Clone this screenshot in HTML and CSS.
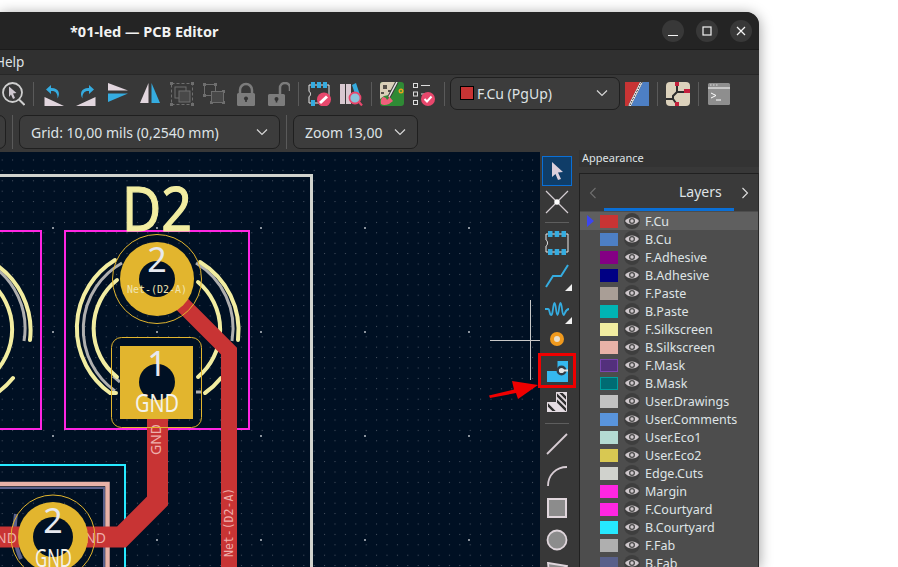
FILE: index.html
```html
<!DOCTYPE html>
<html lang="en">
<head>
    <meta charset="UTF-8">
    <meta name="viewport" content="width=device-width, initial-scale=1.0">
    <title>PCB Editor</title>
    <link rel="stylesheet" href="styles.css">
</head>
<body>

<svg class="defs" width="0" height="0">
    <symbol id="eye" viewBox="0 0 14 14">
        <path d="M0 7C3 2.300 11 2.300 14 7 11 11.700 3 11.700 0 7Z" fill="#cfc8cc"/>
        <circle cx="7" cy="7" r="3" fill="#4a4a4a"/>
        <circle cx="7" cy="7" r="1.700" fill="#cfc8cc"/>
    </symbol>
    <symbol id="chev" viewBox="0 0 12 8">
        <path d="M1 1.500 6 6.500 11 1.500" fill="none" stroke="#d6d6d6" stroke-width="1.200"/>
    </symbol>
    <g id="led">
        <rect x="65" y="231" width="184" height="198" fill="none" stroke="#ff26e2" stroke-width="2"/>
        <g fill="none" stroke="#afafaf" stroke-width="3">
            <path d="M122 263A76 76 0 0 0 115 391"/>
            <path d="M196 263A76 76 0 0 1 232 341"/>
            <path d="M196 392H202"/>
            <path d="M113 376L120 382"/>
        </g>
        <g fill="none" stroke="#f2eda1" stroke-width="4" stroke-linecap="round">
            <path d="M115 260A80 80 0 0 0 110 393H116"/>
            <path d="M200 262A80 80 0 0 1 238 340"/>
            <path d="M117 280A62 62 0 0 0 117 377"/>
            <path d="M198 282A62 62 0 0 1 198 377"/>
            <path d="M221 378A80 80 0 0 1 205 393"/>
        </g>
    </g>
</svg>

<div class="window">
    <header class="titlebar">
        <span class="title">*01-led — PCB Editor</span>
        <div class="winbtns">
            <span class="winbtn"><svg width="12" height="12" viewBox="0 0 12 12"><path d="M1 10.500H11" stroke="#f4f4f4" stroke-width="1.200"/></svg></span>
            <span class="winbtn"><svg width="12" height="12" viewBox="0 0 12 12"><rect x="2" y="2" width="8" height="8" fill="none" stroke="#f4f4f4" stroke-width="1.200"/></svg></span>
            <span class="winbtn"><svg width="12" height="12" viewBox="0 0 12 12"><path d="M2 2 10 10M10 2 2 10" stroke="#f4f4f4" stroke-width="1.200"/></svg></span>
        </div>
    </header>

    <nav class="menubar"><span class="menu-help">Help</span></nav>

    <div class="toolbar">
        <svg class="ic" viewBox="0 0 24 24"><circle cx="11.500" cy="10.500" r="9.500" fill="none" stroke="#cfcfcf" stroke-width="1.800"/><path d="M18 17.500 23.500 23" stroke="#cfcfcf" stroke-width="2"/><path d="M8 4.500 15.500 11 12 11.500 14 16 12 17 10 12.500 8 15Z" fill="#cfc8d0"/></svg>
        <i class="sep"></i>
        <svg class="ic" viewBox="0 0 24 24"><path d="M2.500 15 22 24H2.500Z" fill="#e2d6de"/><path d="M9 3 4 7.500 9 12V9C13 8.500 16 11 15.500 16.500 19 11 16 5.500 9 6Z" fill="#35ace0"/></svg>
        <svg class="ic" viewBox="0 0 24 24"><path d="M21.500 15 2 24H21.500Z" fill="#e2d6de"/><path d="M15 3 20 7.500 15 12V9C11 8.500 8 11 8.500 16.500 5 11 8 5.500 15 6Z" fill="#35ace0"/></svg>
        <svg class="ic" viewBox="0 0 24 24"><path d="M2 1 22 8.500H2Z" fill="#e2d6de"/><path d="M2 11.500H22L2 20Z" fill="#35ace0"/></svg>
        <svg class="ic" viewBox="0 0 24 24"><path d="M10.500 1V21H2Z" fill="#e2d6de"/><path d="M13.500 1V21H22Z" fill="#35ace0"/></svg>
        <svg class="ic" viewBox="0 0 24 24"><rect x="1.500" y="1.500" width="21" height="21" fill="none" stroke="#6e6e6e" stroke-dasharray="3 2"/><g fill="#6e6e6e"><rect x="0" y="0" width="3" height="3"/><rect x="21" y="0" width="3" height="3"/><rect x="0" y="21" width="3" height="3"/><rect x="21" y="21" width="3" height="3"/></g><rect x="5" y="5" width="11" height="11" fill="none" stroke="#6e6e6e"/><rect x="9" y="9" width="11" height="11" fill="#484848" stroke="#6e6e6e"/></svg>
        <svg class="ic" viewBox="0 0 24 24"><g fill="#6e6e6e"><rect x="1" y="1" width="3" height="3"/><rect x="12" y="1" width="3" height="3"/><rect x="1" y="12" width="3" height="3"/><rect x="8" y="19" width="3" height="3"/><rect x="20" y="8" width="3" height="3"/><rect x="20" y="19" width="3" height="3"/></g><rect x="2.500" y="2.500" width="11" height="11" fill="none" stroke="#6e6e6e"/><rect x="9.500" y="9.500" width="12" height="11" fill="#484848" stroke="#6e6e6e"/></svg>
        <svg class="ic" viewBox="0 0 24 24"><path d="M6 12V8A6 6 0 0 1 18 8V12" fill="none" stroke="#7c7c7c" stroke-width="2.500"/><rect x="3" y="11" width="18" height="13" rx="1.500" fill="#7c7c7c"/><circle cx="12" cy="16.500" r="2" fill="#333"/><path d="M11.200 17H12.800V20H11.200Z" fill="#333"/></svg>
        <svg class="ic" viewBox="0 0 24 24"><path d="M14 12V6A5 5 0 0 1 24 6V9" fill="none" stroke="#7c7c7c" stroke-width="2.500"/><rect x="2" y="12" width="17" height="12" rx="1.500" fill="#7c7c7c"/><circle cx="10.500" cy="17" r="2" fill="#333"/><path d="M9.700 17.500H11.300V20.500H9.700Z" fill="#333"/></svg>
        <i class="sep"></i>
        <svg class="ic" viewBox="0 0 24 24"><path d="M2 3H22V21H2V14.500C4 14 4 10 2 9.500Z" fill="none" stroke="#e6e6e6"/><g fill="#35ace0"><rect x="4" y="0" width="4" height="6"/><rect x="10" y="0" width="4" height="6"/><rect x="16" y="0" width="4" height="6"/><rect x="4" y="18" width="4" height="6"/></g><circle cx="17" cy="17.500" r="7" fill="#e8476c"/><path d="M13 21 20 14.500" stroke="#fff" stroke-width="3"/></svg>
        <svg class="ic" viewBox="0 0 24 24"><rect x="1" y="2" width="5" height="20" fill="#d8c8d0"/><rect x="7" y="2" width="5" height="20" fill="#d8c8d0"/><path d="M13 3 17 1 22 16 18 18Z" fill="#35ace0"/><circle cx="16" cy="16" r="5.500" fill="#8cc4dc" stroke="#e8476c" stroke-width="1.800"/><path d="M20 20 23 23.500" stroke="#e8476c" stroke-width="2.200"/></svg>
        <i class="sep"></i>
        <svg class="ic" viewBox="0 0 24 24"><rect width="24" height="24" rx="3" fill="#2f8a35"/><path d="M0 3Q0 0 3 0H17L9 13 4 14 0 17Z" fill="#d9cfb8"/><path d="M3 3H7V7H3ZM8 8H11V10H8ZM1 10H4V12H1Z" fill="#55504a"/><path d="M17 0 9 15" stroke="#3a3a3a" stroke-width="3.500"/><path d="M17 0 9 15" stroke="#e8e8e8" stroke-width="1.500"/><circle cx="21" cy="9" r="2.500" fill="#e8a020"/><circle cx="21" cy="9" r="1" fill="#2f8a35"/><path d="M8 13 13 19 9 22Q4 24 1 22 0 17 3 15 6 15 7 18L9 16Z" fill="#f0607c"/></svg>
        <svg class="ic" viewBox="0 0 24 24"><g fill="none" stroke="#dcdcdc"><rect x="1.500" y="1.500" width="4" height="4"/><rect x="1.500" y="10" width="4" height="4"/><rect x="1.500" y="18.500" width="4" height="4"/></g><path d="M9 3.500H18M9 12H14" stroke="#dcdcdc"/><circle cx="16" cy="17" r="7" fill="#e8476c"/><path d="M12.500 17 15 19.500 19.500 14.500" fill="none" stroke="#fff" stroke-width="2"/></svg>
        <i class="sep"></i>
        <div class="combo combo-layer"><span class="layer-dot"></span><span class="combo-text">F.Cu (PgUp)</span><svg class="chev" viewBox="0 0 12 8"><use href="#chev"/></svg></div>
        <svg class="ic" viewBox="0 0 24 24"><path d="M0 0H15L3 24H0Z" fill="#c83434"/><path d="M24 0H18L6 24H24Z" fill="#4d7fc4"/><path d="M16.500 0 4.500 24" stroke="#fff" stroke-width="2.500"/><path d="M16.500 0 4.500 24" stroke="#222" stroke-width="1" stroke-dasharray="2 1"/></svg>
        <i class="sep"></i>
        <svg class="ic" viewBox="0 0 24 24"><rect width="24" height="24" rx="4" fill="#dcd2bc"/><path d="M11 2V10L7 14V18M11 10H19M0 17H7L10 21H12" fill="none" stroke="#2e2e2e" stroke-width="2"/><g fill="#c4203c"><rect x="9" y="0" width="4" height="4"/><rect x="18" y="7" width="6" height="4"/><rect x="9" y="20" width="4" height="4"/></g></svg>
        <i class="sep"></i>
        <svg class="ic" viewBox="0 0 24 24"><rect x="1" y="1" width="22" height="22" rx="1.500" fill="#8e8e8e"/><path d="M1 6H23" stroke="#fff"/><path d="M3 3H4.500M6 3H7.500M9 3H10.500" stroke="#ddd"/><path d="M4 11 9 13.500 4 16" fill="none" stroke="#fff"/><path d="M9 18H14" stroke="#fff"/></svg>
    </div>

    <div class="toolbar toolbar-two">
        <div class="combo combo-cut"></div>
        <i class="sep"></i>
        <div class="combo combo-grid"><span class="combo-text">Grid: 10,00 mils (0,2540 mm)</span><svg class="chev" viewBox="0 0 12 8"><use href="#chev"/></svg></div>
        <i class="sep"></i>
        <div class="combo combo-zoom"><span class="combo-text">Zoom 13,00</span><svg class="chev" viewBox="0 0 12 8"><use href="#chev"/></svg></div>
    </div>

    <div class="workspace">
        <svg class="canvas" width="540" height="415" viewBox="0 152 540 415">
            <defs>
                <pattern id="minor" x="1.700" y="3.500" width="10.400" height="10.400" patternUnits="userSpaceOnUse">
                    <rect width="1" height="1" fill="#4a5564"/>
                </pattern>
                <pattern id="major" x="52" y="227" width="104" height="104" patternUnits="userSpaceOnUse">
                    <rect width="2" height="2" fill="#8a929c"/>
                </pattern>
            </defs>
            <rect x="0" y="152" width="540" height="415" fill="#001023"/>
            <rect x="0" y="152" width="540" height="415" fill="url(#minor)"/>
            <rect x="0" y="152" width="540" height="415" fill="url(#major)"/>

            <path d="M0 175.500H311.500V567" fill="none" stroke="#d0d2cd" stroke-width="3"/>

            <use href="#led" x="-208"/>
            <use href="#led"/>

            <!-- bottom LED footprint, back side outline -->
            <path d="M0 465H125V567" fill="none" stroke="#26e9ff" stroke-width="2"/>
            <path d="M0 484H107.500V567" fill="none" stroke="#e8b2a7" stroke-width="4.500"/>
            <path d="M0 488H104V567" fill="none" stroke="#58608a" stroke-width="2"/>
            <path d="M16 514Q12 540 21 559" fill="none" stroke="#58608a" stroke-width="4"/>

            <!-- tracks -->
            <path d="M157 279 229 351V567" fill="none" stroke="#c83434" stroke-width="16"/>
            <path d="M157.500 400V501L121.500 537H0" fill="none" stroke="#c83434" stroke-width="21"/>
            <text class="net net-track" transform="translate(233,557) rotate(-90)">Net-(D2-A)</text>
            <text class="net net-gnd" transform="translate(161,455) rotate(-90)">GND</text>
            <text class="net net-gnd" x="-4" y="543">ND</text>
            <text class="net net-gnd" x="85" y="543">ND</text>

            <!-- D2 -->
            <text class="refdes" x="122" y="231" textLength="70" lengthAdjust="spacingAndGlyphs">D2</text>
            <circle cx="157" cy="279" r="44.500" fill="none" stroke="#e2b52e"/>
            <circle cx="157" cy="279" r="37" fill="#e2b52e"/>
            <circle cx="157" cy="279" r="18" fill="#001023"/>
            <text class="padnum" x="157" y="272">2</text>
            <text class="padnet" x="157" y="293">Net-(D2-A)</text>

            <rect x="111.500" y="337.500" width="90" height="90" rx="10" fill="none" stroke="#e2b52e"/>
            <rect x="120" y="346" width="73" height="73" fill="#e2b52e"/>
            <circle cx="157" cy="382" r="18" fill="#001023"/>
            <text class="padnum" x="157" y="376">1</text>
            <text class="padgnd" x="135" y="412" textLength="44" lengthAdjust="spacingAndGlyphs">GND</text>

            <circle cx="53" cy="537" r="42" fill="none" stroke="#e2b52e"/>
            <circle cx="53" cy="537" r="35" fill="#e2b52e"/>
            <circle cx="53" cy="537" r="20" fill="#001023"/>
            <text class="padnum" x="53" y="533">2</text>
            <text class="padgnd" x="35" y="567" textLength="37" lengthAdjust="spacingAndGlyphs">GND</text>

            <path d="M530.500 300V380M490 340.500H540" stroke="#c8c8c8" stroke-width="1"/>
        </svg>

        <aside class="tools">
            <div class="tool tool-on h30"><svg width="16" height="20" viewBox="0 0 16 20"><path d="M3 1 14 11 9 11.500 12 18 9 19 6.500 13 3 16Z" fill="#dcd0dc"/></svg></div>
            <div class="tool"><svg width="24" height="24" viewBox="0 0 24 24"><path d="M1 1 23 23M23 1 1 23" stroke="#d4cdd2" stroke-width="1.200"/><circle cx="12" cy="12" r="2.700" fill="#fff"/></svg></div>
            <div class="tool-sep"></div>
            <div class="tool"><svg width="24" height="24" viewBox="0 0 24 24"><path d="M1 3H23V21H1V15C3 14 3 10 1 9Z" fill="none" stroke="#e8e8e8"/><g fill="#35ace0"><rect x="3" y="0" width="4.500" height="6"/><rect x="9.700" y="0" width="4.500" height="6"/><rect x="16.500" y="0" width="4.500" height="6"/><rect x="3" y="18" width="4.500" height="6"/><rect x="9.700" y="18" width="4.500" height="6"/><rect x="16.500" y="18" width="4.500" height="6"/></g></svg></div>
            <div class="tool h33 more"><svg width="24" height="24" viewBox="0 0 24 24"><path d="M1 23 8 12H16L23 1" fill="none" stroke="#35ace0" stroke-width="2"/></svg></div>
            <div class="tool h33 more"><svg width="24" height="16" viewBox="0 0 24 16"><path d="M0 8H3C5 8 4 13 6 14S8 2 9.500 2 11 14 12.500 14 14 2 15.500 2 17 14 18.500 14 20 8 24 8" fill="none" stroke="#35ace0" stroke-width="1.800"/></svg></div>
            <div class="tool h28"><svg width="16" height="16" viewBox="0 0 16 16"><circle cx="8" cy="8" r="7" fill="#f09a1e"/><circle cx="8" cy="8" r="3" fill="#e8e0d0"/></svg></div>
            <div class="tool tool-low"><svg width="21" height="21" viewBox="0 0 21 21"><path d="M10.500 0H21V21H0V10H10.500Z" fill="#35b8ee"/><circle cx="14.500" cy="9.500" r="3.800" fill="#e4e4e4" stroke="#333b44" stroke-width="2.400"/><path d="M15 9.500H21" stroke="#e4e4e4" stroke-width="2"/></svg></div>
            <div class="tool h34"><svg width="20" height="20" viewBox="0 0 20 20"><clipPath id="hz"><path d="M9 0H20V20H0V10H9Z"/></clipPath><path d="M9 0H20V20H0V10H9Z" fill="#e4dce2"/><g clip-path="url(#hz)" stroke="#2e2e2e" stroke-width="2.300"><path d="M6 -1 28 21M0 -1 24 23M-3 9 14 26M12 -1 30 17"/></g><path d="M9.500 .5H19.500V19.500H.5V10.500H9.500Z" fill="none" stroke="#e4dce2"/></svg></div>
            <div class="tool-sep"></div>
            <div class="tool"><svg width="22" height="22" viewBox="0 0 22 22"><path d="M1 21 21 1" stroke="#d8cdd4" stroke-width="1.800"/></svg></div>
            <div class="tool"><svg width="22" height="22" viewBox="0 0 22 22"><path d="M2 21C2 10 10 2 21 2" fill="none" stroke="#d8cdd4" stroke-width="1.800"/></svg></div>
            <div class="tool"><svg width="22" height="22" viewBox="0 0 22 22"><rect x="2" y="2" width="18" height="18" fill="#8c8c8c" stroke="#e0d6dc" stroke-width="2"/></svg></div>
            <div class="tool"><svg width="22" height="22" viewBox="0 0 22 22"><circle cx="11" cy="11" r="9.500" fill="#8c8c8c" stroke="#e0d6dc" stroke-width="1.800"/></svg></div>
            <div class="tool"><svg width="22" height="22" viewBox="0 0 22 22"><path d="M2 2 21 5 12 10 4 22Z" fill="#8c8c8c" stroke="#e0d6dc" stroke-width="1.800"/></svg></div>
        </aside>

        <aside class="panel">
            <div class="panel-head">Appearance</div>
            <div class="panel-box">
                <div class="tabs">
                    <svg class="tab-arrow" width="8" height="12" viewBox="0 0 8 12"><path d="M6.500 1 1.500 6 6.500 11" fill="none" stroke="#6f6f6f" stroke-width="1.100"/></svg>
                    <span class="tab-name">Layers</span>
                    <svg class="tab-arrow tab-next" width="8" height="12" viewBox="0 0 8 12"><path d="M1.500 1 6.500 6 1.500 11" fill="none" stroke="#e0e0e0" stroke-width="1.100"/></svg>
                </div>
                <ul class="layers">
                    <li class="active"><i class="sw c-fcu"></i><span class="eye"><svg width="14" height="14"><use href="#eye"/></svg></span>F.Cu</li>
                    <li><i class="sw c-bcu"></i><span class="eye"><svg width="14" height="14"><use href="#eye"/></svg></span>B.Cu</li>
                    <li><i class="sw c-fadh"></i><span class="eye"><svg width="14" height="14"><use href="#eye"/></svg></span>F.Adhesive</li>
                    <li><i class="sw c-badh"></i><span class="eye"><svg width="14" height="14"><use href="#eye"/></svg></span>B.Adhesive</li>
                    <li><i class="sw c-fpaste"></i><span class="eye"><svg width="14" height="14"><use href="#eye"/></svg></span>F.Paste</li>
                    <li><i class="sw c-bpaste"></i><span class="eye"><svg width="14" height="14"><use href="#eye"/></svg></span>B.Paste</li>
                    <li><i class="sw c-fsilk"></i><span class="eye"><svg width="14" height="14"><use href="#eye"/></svg></span>F.Silkscreen</li>
                    <li><i class="sw c-bsilk"></i><span class="eye"><svg width="14" height="14"><use href="#eye"/></svg></span>B.Silkscreen</li>
                    <li><i class="sw c-fmask"></i><span class="eye"><svg width="14" height="14"><use href="#eye"/></svg></span>F.Mask</li>
                    <li><i class="sw c-bmask"></i><span class="eye"><svg width="14" height="14"><use href="#eye"/></svg></span>B.Mask</li>
                    <li><i class="sw c-draw"></i><span class="eye"><svg width="14" height="14"><use href="#eye"/></svg></span>User.Drawings</li>
                    <li><i class="sw c-comm"></i><span class="eye"><svg width="14" height="14"><use href="#eye"/></svg></span>User.Comments</li>
                    <li><i class="sw c-eco1"></i><span class="eye"><svg width="14" height="14"><use href="#eye"/></svg></span>User.Eco1</li>
                    <li><i class="sw c-eco2"></i><span class="eye"><svg width="14" height="14"><use href="#eye"/></svg></span>User.Eco2</li>
                    <li><i class="sw c-edge"></i><span class="eye"><svg width="14" height="14"><use href="#eye"/></svg></span>Edge.Cuts</li>
                    <li><i class="sw c-margin"></i><span class="eye"><svg width="14" height="14"><use href="#eye"/></svg></span>Margin</li>
                    <li><i class="sw c-margin"></i><span class="eye"><svg width="14" height="14"><use href="#eye"/></svg></span>F.Courtyard</li>
                    <li><i class="sw c-bcrt"></i><span class="eye"><svg width="14" height="14"><use href="#eye"/></svg></span>B.Courtyard</li>
                    <li><i class="sw c-ffab"></i><span class="eye"><svg width="14" height="14"><use href="#eye"/></svg></span>F.Fab</li>
                    <li><i class="sw c-bfab"></i><span class="eye"><svg width="14" height="14"><use href="#eye"/></svg></span>B.Fab</li>
                </ul>
            </div>
        </aside>
    </div>
</div>

<!-- annotation drawn over the screenshot -->
<div class="callout-box"></div>
<svg class="callout-arrow" width="60" height="30" viewBox="0 0 60 30"><path d="M1 17.500 26 11.500 24 3 50 7 30 21 28 15 2 20Z" fill="#f00000"/></svg>

</body>
</html>
```

FILE: styles.css
```css
html, body {
    margin: 0;
    height: 567px;
    overflow: hidden;
    background: #fff;
}
body {
    position: relative;
    font-family: "Noto Sans", sans-serif;
    color: #dfe3e6;
}
.defs {
    position: absolute;
}
.window {
    width: 759px;
    height: 555px;
    margin-top: 12px;
    display: flex;
    flex-direction: column;
    overflow: hidden;
    background: #383838;
    border-top-right-radius: 13px;
    box-shadow: 0 2px 14px rgba(0, 0, 0, .4);
}

/* title bar */
.titlebar {
    height: 37px;
    flex: none;
    display: flex;
    align-items: center;
    justify-content: space-between;
    padding: 0 7px 0 70px;
    background: #242424;
    border-bottom: 1px solid #1b1b1b;
}
.title {
    font-size: 14.500px;
    font-weight: 700;
    color: #f2f2f2;
}
.winbtns {
    display: flex;
    gap: 12px;
}
.winbtn {
    width: 22px;
    height: 22px;
    display: flex;
    align-items: center;
    justify-content: center;
    border-radius: 50%;
    background: #383838;
}

/* menu */
.menubar {
    height: 24px;
    flex: none;
    overflow: hidden;
    background: #303030;
    border-bottom: 1px solid #272727;
}
.menu-help {
    display: block;
    margin-left: -5px;
    font-size: 13.500px;
    line-height: 24px;
}

/* toolbars */
.toolbar {
    height: 38px;
    flex: none;
    display: flex;
    align-items: center;
    gap: 8px;
    padding-left: 1px;
    background: #383838;
}
.toolbar-two {
    height: 37px;
    gap: 6px;
    padding: 2px 0 0;
    align-items: flex-start;
    box-sizing: border-box;
}
.ic {
    width: 24px;
    height: 24px;
    flex: none;
}
.sep {
    width: 1px;
    height: 24px;
    flex: none;
    background: #5a5a5a;
}
.toolbar-two .sep {
    height: 34px;
}
.combo {
    height: 34px;
    box-sizing: border-box;
    flex: none;
    display: flex;
    align-items: center;
    justify-content: space-between;
    padding: 0 11px;
    background: #3c3c3c;
    border: 1px solid #1f1f1f;
    border-radius: 7px;
    font-size: 14px;
}
.combo-layer {
    width: 170px;
    height: 33px;
    margin: -2px -3px 0 -3px;
    padding-left: 9px;
    justify-content: flex-start;
}
.layer-dot {
    width: 12px;
    height: 12px;
    margin-right: 3px;
    background: #c83434;
    border: 1px solid #000;
}
.combo-layer .chev {
    margin-left: auto;
}
.combo-cut {
    width: 14px;
    padding: 0;
    margin-left: -8px;
}
.combo-grid {
    width: 261px;
}
.combo-zoom {
    width: 125px;
}
.chev {
    width: 12px;
    height: 8px;
    flex: none;
}

/* workspace */
.workspace {
    flex: 1;
    min-height: 0;
    display: flex;
    margin-top: 2px;
}
.canvas {
    flex: none;
    display: block;
}
.net {
    font-family: "DejaVu Sans Mono", monospace;
    fill: #eeb0ac;
}
.net-track {
    font-size: 11.500px;
}
.net-gnd {
    font-family: "Noto Sans", sans-serif;
    font-size: 14px;
}
.refdes {
    font-family: "Noto Sans", sans-serif;
    font-size: 62px;
    fill: #f2eda1;
    stroke: #f2eda1;
    stroke-width: 1.200px;
}
.padnum {
    font-family: "Noto Sans", sans-serif;
    font-size: 34px;
    fill: #e6e9f0;
    text-anchor: middle;
}
.padnet {
    font-family: "DejaVu Sans Mono", monospace;
    font-size: 10px;
    fill: #f0e4b0;
    text-anchor: middle;
}
.padgnd {
    font-family: "Noto Sans", sans-serif;
    font-size: 26px;
    fill: #f4f2ea;
}

/* right vertical toolbar */
.tools {
    width: 38px;
    flex: none;
    box-sizing: border-box;
    padding: 4px 6px 0 2px;
    background: #383838;
    overflow: hidden;
}
.tool {
    height: 32px;
    position: relative;
    display: flex;
    align-items: center;
    justify-content: center;
    box-sizing: border-box;
    flex: none;
}
.tool-on {
    background: #0f3d68;
    border: 1px solid #0a6fd6;
}
.tool-low {
    padding-top: 4px;
}
.h28 { height: 28px; }
.h30 { height: 30px; }
.h33 { height: 33px; }
.h34 { height: 34px; }
.more::after {
    content: "";
    position: absolute;
    right: 0;
    bottom: 1px;
    border-style: solid;
    border-width: 0 0 7px 7px;
    border-color: transparent transparent #f0f0f0 transparent;
}
.tool-sep {
    height: 9px;
    display: flex;
    align-items: center;
}
.tool-sep::before {
    content: "";
    display: block;
    width: 24px;
    height: 1px;
    margin: 0 auto;
    background: #5e5e5e;
}

/* appearance panel */
.panel {
    flex: 1;
    display: flex;
    flex-direction: column;
    padding-left: 1px;
    background: #383838;
}
.panel-head {
    height: 17px;
    flex: none;
    margin-top: -2px;
    padding-left: 3px;
    font-size: 11px;
    line-height: 15px;
    background: #333;
}
.panel-box {
    flex: 1;
    margin-top: 6px;
    border: 1px solid #202020;
    border-right-color: #2a2a2a;
    background: #4d4d4d;
}
.tabs {
    height: 37px;
    display: flex;
    align-items: center;
    padding: 0 9px;
    background: #3a3a3a;
    position: relative;
}
.tabs::after {
    content: "";
    position: absolute;
    left: 24px;
    bottom: 0;
    width: 130px;
    height: 3px;
    background: #0a6fd6;
}
.tab-name {
    margin-left: 82px;
    margin-top: -3px;
    font-size: 14px;
}
.tab-next {
    margin-left: auto;
}
.layers {
    list-style: none;
    margin: 0;
    padding: 1px 0 0;
}
.layers li {
    height: 18px;
    display: flex;
    align-items: center;
    padding-left: 20px;
    position: relative;
    font-size: 12.500px;
    color: #dfe4e6;
}
.layers li.active {
    background: #5f5f5f;
}
.layers li.active::before {
    content: "";
    position: absolute;
    left: 7px;
    top: 3px;
    border-style: solid;
    border-width: 6px 0 6px 7px;
    border-color: transparent transparent transparent #3c46f0;
}
.sw {
    width: 18px;
    height: 13px;
    flex: none;
    box-sizing: border-box;
}
.eye {
    width: 16px;
    height: 16px;
    margin: 0 5px 0 6px;
    flex: none;
    display: flex;
    align-items: center;
    justify-content: center;
    border-radius: 50%;
    background: #3e3e3e;
}
.c-fcu { background: #c83434; }
.c-bcu { background: #4d7fc4; }
.c-fadh { background: #840084; }
.c-badh { background: #000084; }
.c-fpaste { background: #a99e96; }
.c-bpaste { background: #00b4b4; }
.c-fsilk { background: #f2eda1; }
.c-bsilk { background: #e8b2a7; }
.c-fmask { background: #53307c; border: 1px solid #7a45b0; }
.c-bmask { background: #006c73; border: 1px solid #00a0a0; }
.c-draw { background: #c2c2c2; }
.c-comm { background: #5994dc; }
.c-eco1 { background: #b4dbd2; }
.c-eco2 { background: #d8c852; }
.c-edge { background: #d0d2cd; }
.c-margin { background: #ff26e2; }
.c-bcrt { background: #26e9ff; }
.c-ffab { background: #afafaf; }
.c-bfab { background: #58608a; }

/* red annotation */
.callout-box {
    position: absolute;
    left: 538px;
    top: 353px;
    width: 32px;
    height: 29px;
    border: 3px solid #f00000;
}
.callout-arrow {
    position: absolute;
    left: 488px;
    top: 378px;
}
```
